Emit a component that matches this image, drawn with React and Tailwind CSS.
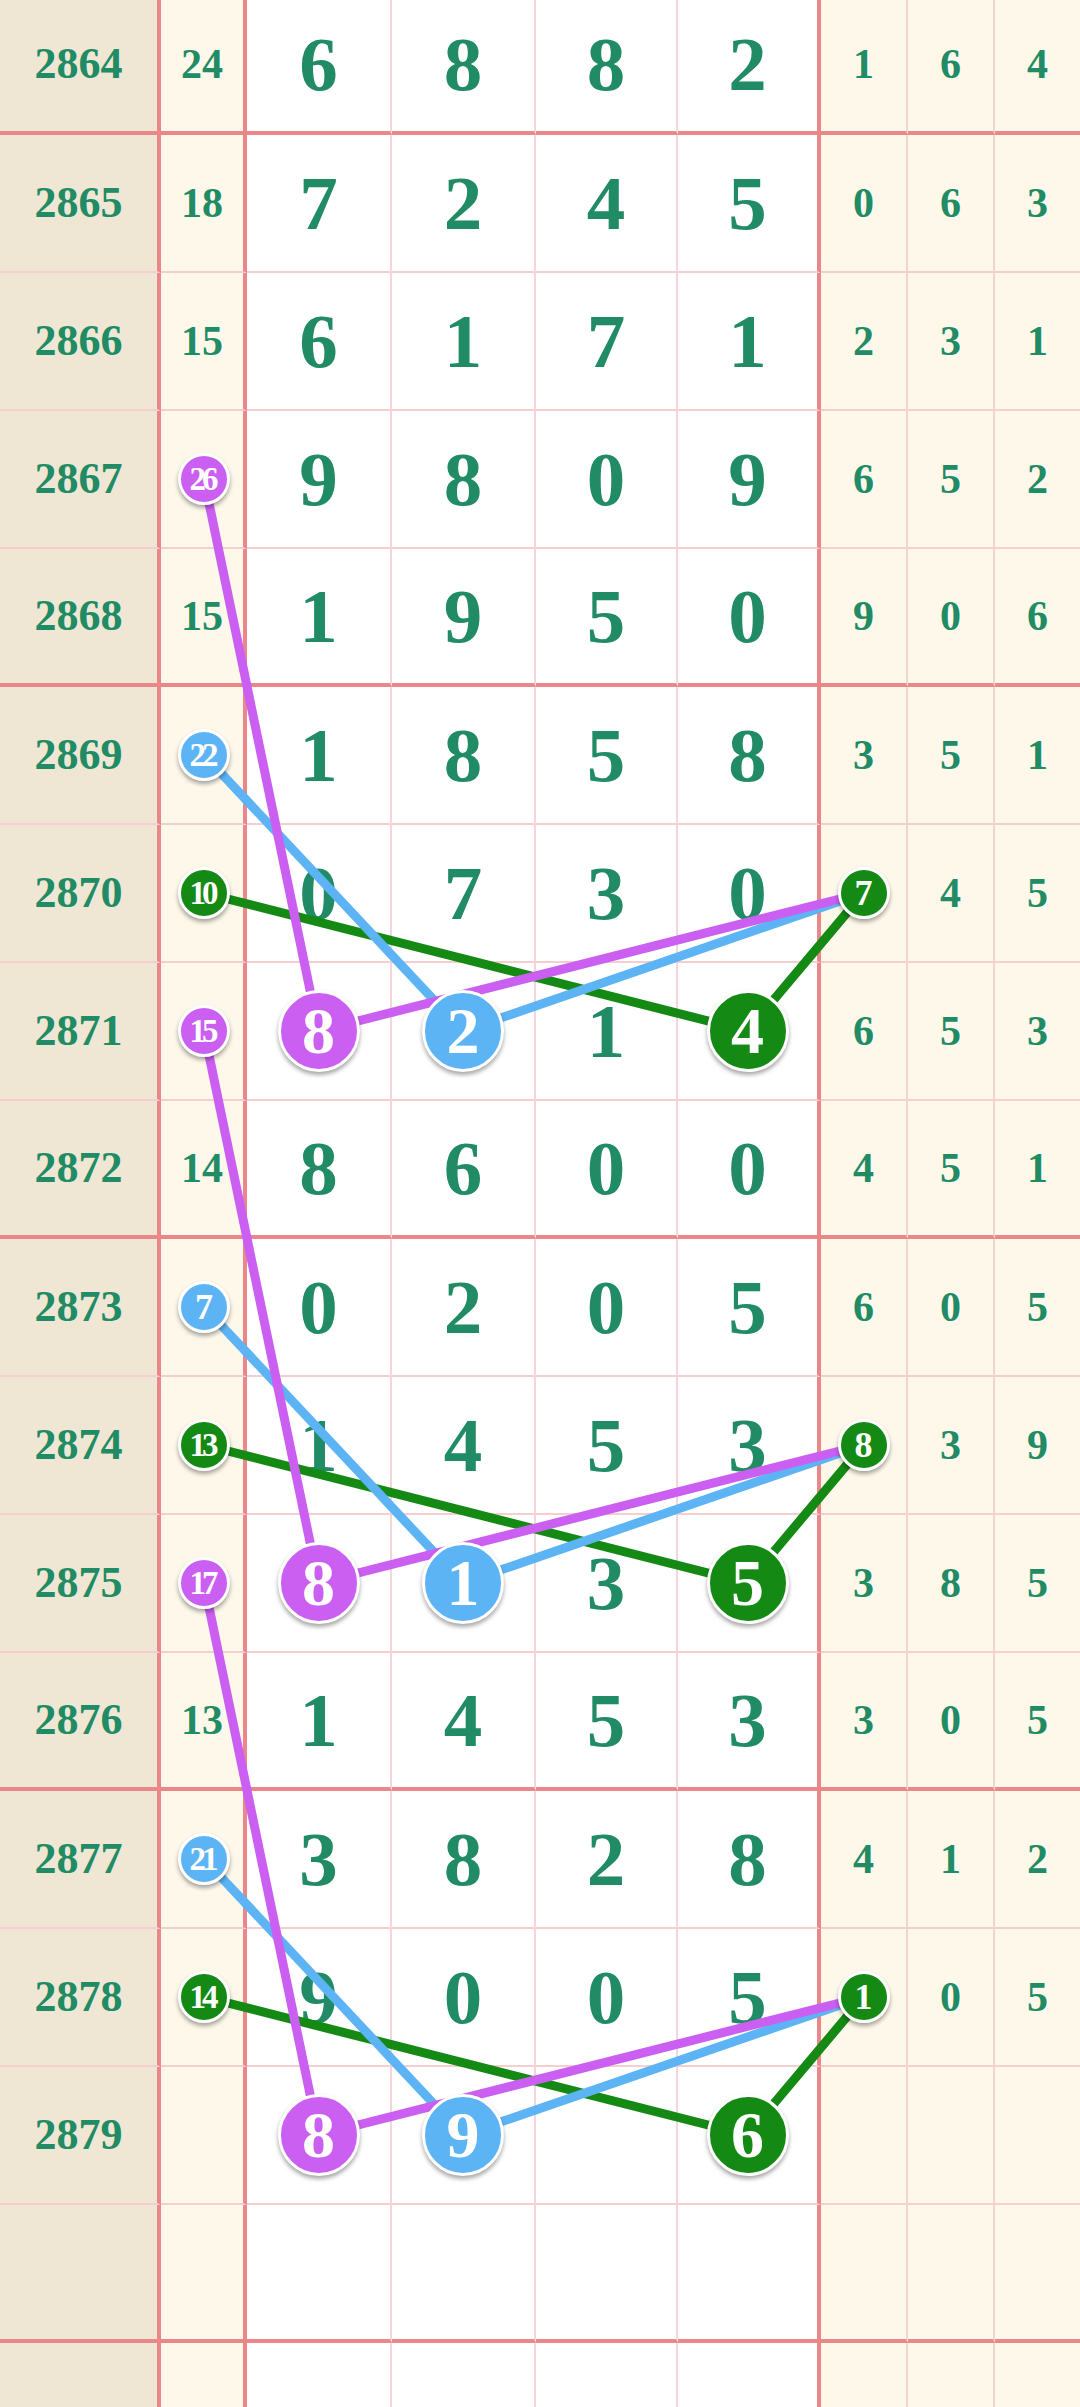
import React from 'react';

const P = '#cb5ff2';
const B = '#5db4f5';
const G = '#148a14';

// one row: issue, sum, four drawn digits, three right-hand digits
// marked cells are { v, c } where c picks the ball colour
const rows = [
  { n: '2864', s: '24', d: ['6', '8', '8', '2'], r: ['1', '6', '4'] },
  { n: '2865', s: '18', d: ['7', '2', '4', '5'], r: ['0', '6', '3'] },
  { n: '2866', s: '15', d: ['6', '1', '7', '1'], r: ['2', '3', '1'] },
  { n: '2867', s: { v: '26', c: P }, d: ['9', '8', '0', '9'], r: ['6', '5', '2'] },
  { n: '2868', s: '15', d: ['1', '9', '5', '0'], r: ['9', '0', '6'] },
  { n: '2869', s: { v: '22', c: B }, d: ['1', '8', '5', '8'], r: ['3', '5', '1'] },
  { n: '2870', s: { v: '10', c: G }, d: ['0', '7', '3', '0'], r: [{ v: '7', c: G }, '4', '5'] },
  { n: '2871', s: { v: '15', c: P }, d: [{ v: '8', c: P }, { v: '2', c: B }, '1', { v: '4', c: G }], r: ['6', '5', '3'] },
  { n: '2872', s: '14', d: ['8', '6', '0', '0'], r: ['4', '5', '1'] },
  { n: '2873', s: { v: '7', c: B }, d: ['0', '2', '0', '5'], r: ['6', '0', '5'] },
  { n: '2874', s: { v: '13', c: G }, d: ['1', '4', '5', '3'], r: [{ v: '8', c: G }, '3', '9'] },
  { n: '2875', s: { v: '17', c: P }, d: [{ v: '8', c: P }, { v: '1', c: B }, '3', { v: '5', c: G }], r: ['3', '8', '5'] },
  { n: '2876', s: '13', d: ['1', '4', '5', '3'], r: ['3', '0', '5'] },
  { n: '2877', s: { v: '21', c: B }, d: ['3', '8', '2', '8'], r: ['4', '1', '2'] },
  { n: '2878', s: { v: '14', c: G }, d: ['9', '0', '0', '5'], r: [{ v: '1', c: G }, '0', '5'] },
  { n: '2879', s: '', d: [{ v: '8', c: P }, { v: '9', c: B }, '', { v: '6', c: G }], r: ['', '', ''] },
  { n: '', s: '', d: ['', '', '', ''], r: ['', '', ''] },
  { n: '', s: '', d: ['', '', '', ''], r: ['', '', ''] },
];

const colCls = [
  'bg-[#efe7d3] border-r-[4px] border-r-[#e9878b]',
  'bg-[#fdf8ea] border-r-[4px] border-r-[#e9878b]',
  'bg-white border-r-[2px] border-r-[#f5d5da]',
  'bg-white border-r-[2px] border-r-[#f5d5da]',
  'bg-white border-r-[2px] border-r-[#f5d5da]',
  'bg-white border-r-[4px] border-r-[#e9878b]',
  'bg-[#fdf8ea] border-r-[2px] border-r-[#f2d5cc]',
  'bg-[#fdf8ea] border-r-[2px] border-r-[#f2d5cc]',
  'bg-[#fdf8ea]',
];

// centres of the balls, in px from the top-left of the grid
const X = { s: 204, d0: 318.5, d1: 463, d3: 747.5, r0: 863.5 };
const Y = (i) => 138 * i + 68;

const paths = [
  { c: G, pts: [[X.s, 6], [X.d3, 7], [X.r0, 6]] },
  { c: G, pts: [[X.s, 10], [X.d3, 11], [X.r0, 10]] },
  { c: G, pts: [[X.s, 14], [X.d3, 15], [X.r0, 14]] },
  { c: B, pts: [[X.s, 5], [X.d1, 7], [X.r0, 6]] },
  { c: B, pts: [[X.s, 9], [X.d1, 11], [X.r0, 10]] },
  { c: B, pts: [[X.s, 13], [X.d1, 15], [X.r0, 14]] },
  { c: P, pts: [[X.s, 3], [X.d0, 7], [X.r0, 6]] },
  { c: P, pts: [[X.s, 7], [X.d0, 11], [X.r0, 10]] },
  { c: P, pts: [[X.s, 11], [X.d0, 15], [X.r0, 14]] },
];

function Ball({ v, c, big, shift }) {
  const size = big
    ? 'w-[82px] h-[82px] text-[66px]'
    : v.length > 1
      ? 'w-[52px] h-[52px] text-[33px] tracking-[-4px]'
      : 'w-[52px] h-[52px] text-[36px]';
  return (
    <div
      className={`relative z-20 ${size} ${shift ? 'translate-x-[2px]' : ''} rounded-full border-[3px] border-white shadow-[0_3px_4px_rgba(0,0,0,0.35)] flex items-center justify-center text-white font-bold leading-none`}
      style={{ backgroundColor: c }}
    >
      <span className={v.length > 1 ? 'pr-[4px]' : ''}>{v}</span>
    </div>
  );
}

function Cell({ val, col, thick, textCls, big, shift }) {
  const bottom = thick
    ? 'border-b-[4px] border-b-[#e9878b]'
    : 'border-b-[2px] border-b-[#f5cfd0]';
  return (
    <div className={`${colCls[col]} ${bottom} flex items-center justify-center`}>
      {val && typeof val === 'object' ? (
        <Ball v={val.v} c={val.c} big={big} shift={shift} />
      ) : (
        <span className={`${textCls} font-bold text-[#208b64] leading-none`}>{val}</span>
      )}
    </div>
  );
}

export default function App() {
  return (
    <div className="w-[1080px] h-[2407px] overflow-hidden bg-white" style={{ fontFamily: '"Liberation Serif", "Times New Roman", serif' }}>
      <div className="relative -mt-[3px]">
        <div className="grid grid-cols-[161px_86px_145px_144px_142px_143px_87px_87px_85px] auto-rows-[138px]">
          {rows.map((row, i) => {
            const thick = i % 4 === 0;
            return (
              <React.Fragment key={i}>
                <Cell val={row.n} col={0} thick={thick} textCls="text-[44px]" />
                <Cell val={row.s} col={1} thick={thick} textCls="text-[42px]" shift />
                {row.d.map((v, j) => (
                  <Cell key={'d' + j} val={v} col={2 + j} thick={thick} textCls="text-[77px]" big />
                ))}
                {row.r.map((v, j) => (
                  <Cell key={'r' + j} val={v} col={6 + j} thick={thick} textCls="text-[42px]" />
                ))}
              </React.Fragment>
            );
          })}
        </div>
        <svg className="absolute inset-0 z-10 pointer-events-none" width="1080" height={rows.length * 138}>
          {paths.map((p, k) => (
            <polyline
              key={k}
              points={p.pts.map(([x, i]) => `${x},${Y(i)}`).join(' ')}
              fill="none"
              stroke={p.c}
              strokeWidth="9"
              strokeLinejoin="round"
            />
          ))}
        </svg>
      </div>
    </div>
  );
}
